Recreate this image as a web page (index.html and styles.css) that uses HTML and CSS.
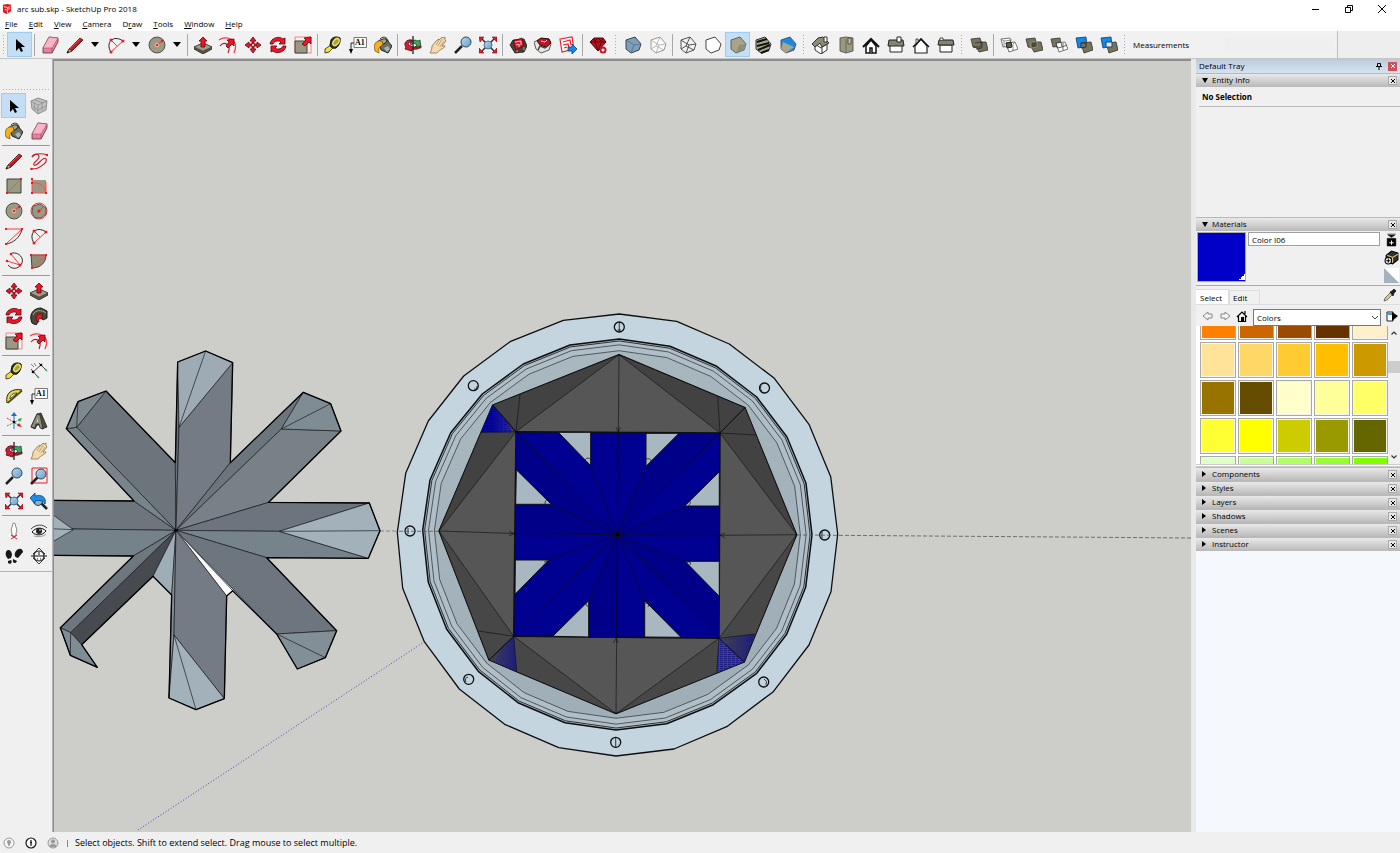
FILE: index.html
```html
<!DOCTYPE html>
<html lang="en">
<head>
<meta charset="utf-8">
<title>arc sub.skp - SketchUp Pro 2018</title>
<link rel="stylesheet" href="styles.css">
</head>
<body>
<svg class="sprite" aria-hidden="true">
<defs>
<g id="cube"><path d="M2 4l9-3 6 7-2 6-8 3-5-4z" stroke-linejoin="round"/></g>
<linearGradient id="lens" x2="1" y2="1"><stop stop-color="#b9d8f0"/><stop offset="1" stop-color="#6b9cc8"/></linearGradient>
</defs>
<symbol id="cursor" viewBox="0 0 18 18"><path d="M5 3v12l3-3 2 4 2-1-2-4h4z" fill="#000"/></symbol>
<symbol id="eraser" viewBox="0 0 18 18"><path d="M8 1l9 1v4l-6 11-9 0v-5z" fill="#e87f9d" stroke="#5d303c" stroke-width=".8"/><path d="M8 1l9 1-6 10-9 0z" fill="#f9b5c8" stroke="#8d4a5c" stroke-width=".5"/><path d="M11 12v5" stroke="#8d4a5c" stroke-width=".7"/></symbol>
<symbol id="pencil" viewBox="0 0 18 18"><path d="M1 17l2-4L14 2l3 2L6 15z" fill="#c81420" stroke="#3b0d0d" stroke-width=".8"/><path d="M1 17l2-4 3 2z" fill="#d9b98b" stroke="#222" stroke-width=".6"/><path d="M4 12.500L14.500 3" stroke="#f46b63" stroke-width=".8"/><path d="M1 17l1-2 1 1z"/></symbol>
<symbol id="arc" viewBox="0 0 18 18"><path d="M4 16C-2 7 6-2 16 5" fill="none" stroke="#222"/><path d="M4 16L16 5M5 5l5 5" stroke="#ff2b36"/><g fill="#f01824"><circle cx="4" cy="16" r="1.500"/><circle cx="16" cy="5" r="1.500"/><circle cx="4" cy="4" r="1.500"/></g></symbol>
<symbol id="circle" viewBox="0 0 18 18"><circle cx="9" cy="9" r="8" fill="#9b9981" stroke="#55544a"/><path d="M9 9l5-4" stroke="#ff2b36"/><circle cx="9" cy="9" r="1.800" fill="#f01824" stroke="#fff" stroke-width=".6"/><circle cx="14" cy="5" r="1.200" fill="#f01824"/></symbol>
<symbol id="push" viewBox="0 0 18 18"><path d="M0 11l9-4 9 4v2l-9 5-9-5z" fill="#56564a" stroke="#26261f" stroke-width=".8"/><path d="M0 11l9-4 9 4-9 4z" fill="#a09e88" stroke="#3c3b30" stroke-width=".6"/><path d="M9 1l4 4h-2v6H7V5H5z" fill="#f21325" stroke="#540710" stroke-width=".8"/></symbol>
<symbol id="offset" viewBox="0 0 18 18"><path d="M0 4C7-1 21 3 15 17" fill="none" stroke="#ff3640" stroke-width="1.200"/><path d="M1 10c4-5 12-2 8 7" fill="none" stroke="#a62024" stroke-width="1.200"/><path d="M7 10l3-4-2-2 7-1v7l-2-2-4 4z" fill="#f21325" stroke="#540710" stroke-width=".8"/></symbol>
<symbol id="move" viewBox="0 0 18 18"><path d="M9 1l3 4h-2v3h3V6l4 3-4 3v-2h-3v3h2l-3 4-3-4h2v-3H5v2L1 9l4-3v2h3V5H6z" fill="#f21325" stroke="#540710" stroke-width=".8"/><circle cx="9" cy="9" r="1" fill="#fff"/></symbol>
<symbol id="rotate" viewBox="0 0 18 18"><g fill="#f21325" stroke="#540710" stroke-width=".8"><path d="M1 8c1-7 10-8 13-5l2-1v6h-6l2-2C10 4 5 5 4 8z"/><path d="M17 10c-1 7-10 8-13 5l-2 1v-6h6l-2 2c2 2 7 1 8-2z"/></g></symbol>
<symbol id="scale" viewBox="0 0 18 18"><path d="M1 1h16v16H1z" fill="none" stroke="#f76a72" stroke-width=".8"/><path d="M1 5h12v12H1z" fill="#9b9981" stroke="#44443a"/><path d="M8 8l4-4-2-2 7-1v7l-2-2-4 4z" fill="#f21325" stroke="#540710" stroke-width=".8"/></symbol>
<symbol id="tape" viewBox="0 0 18 18"><path d="M1 13l6-4 3 2-5 5-4 1z" fill="#f7e332" stroke="#222" stroke-width=".8"/><path d="M7 4c1-3 6-4 9-2 1 3-1 8-4 10-3 1-6-1-6-3z" fill="#30302b" stroke="#111"/><ellipse cx="12" cy="6" rx="4" ry="2.500" fill="#a09b62" stroke="#f0e241" stroke-width="1.500" transform="rotate(-50 12 6)"/></symbol>
<symbol id="labelbox" viewBox="0 0 18 18"><path d="M5 1.500h12.500v10H5z" fill="#fff" stroke="#777"/><path d="M5 7H2v7" fill="none" stroke="#222"/><path d="M0 13h4l-2 5z"/></symbol>
<symbol id="paint" viewBox="0 0 18 18"><path d="M6 3c4-4 9-1 8 4" fill="none" stroke="#333"/><path d="M5 5l7-2 6 7-4 7-7-3z" fill="#6f6e5e" stroke="#24241e"/><ellipse cx="8" cy="6" rx="5" ry="2.500" fill="#a4a28a" stroke="#333" transform="rotate(-22 8 6)"/><path d="M8 5C2 4-1 8 1 15l4 2c-1-5 1-7 4-8z" fill="#f4b222" stroke="#6d4b0a" stroke-width=".7"/><path d="M10 12l4-2 2 3-3 3z" fill="#9db6c4"/></symbol>
<symbol id="orbit" viewBox="0 0 18 18"><path d="M7 9c-2-4 3-6 7-4l2-1 1 8-6-1 2-2c-2-2-4-2-6 0z" fill="#3ba55f" stroke="#1c4228" stroke-width=".8"/><path d="M8 4C2 3-1 8 2 11l-1 2 7 2v-2c5 1 9-1 9-3-4 2-9 1-12-1-2-2 1-3 3-3z" fill="#d71b32" stroke="#4b0911" stroke-width=".8"/><path d="M9 0v18" stroke="#222" stroke-width="1.300"/></symbol>
<symbol id="pan" viewBox="0 0 18 18"><path d="M1 17c1-2 2-4 2-7l4-5 3-2v1l3-3 1 1 2-1v3l1 1-4 5 3 0c0 2-5 3-8 7z" fill="#f3d9ad" stroke="#8a714b" stroke-width=".8"/><path d="M7 9l3-5M9 10l4-7M11 11l4-6" stroke="#9d8256" stroke-width=".6"/></symbol>
<symbol id="zoom" viewBox="0 0 18 18"><path d="M1 17l7-7" stroke="#222" stroke-width="2.500"/><circle cx="12" cy="6" r="5" fill="url(#lens)" stroke="#34485a"/></symbol>
<symbol id="extents" viewBox="0 0 18 18"><path d="M3 3l12 12M15 3L3 15" stroke="#333" stroke-width="1.500"/><circle cx="9" cy="9" r="4" fill="url(#lens)" stroke="#52708a"/><g fill="#f21325" stroke="#540710" stroke-width=".5"><path d="M0 1h5L1 6zM18 1v5l-5-5zM0 17v-5l5 5zM18 17h-5l5-5z"/></g></symbol>
<symbol id="warehouse" viewBox="0 0 18 18"><path d="M1 9l3-5 11-1 3 7-3 6-9 1z" fill="#484137" stroke="#191712" stroke-width=".8"/><path d="M4 5l9-3 2 8-8 4z" fill="#d51426" stroke="#5a0911" stroke-width=".8"/><path d="M6 6l6-1v4M7 9l3-1v3" fill="none" stroke="#fff" stroke-width=".8"/><path d="M8 14v2M15 11v3" stroke="#b6ad95"/></symbol>
<symbol id="share" viewBox="0 0 18 18"><path d="M0 6l6-3h9l2 5-2 6-8 3-5-4z" fill="#e8e6df" stroke="#333" stroke-width=".8"/><path d="M3 5l4-3 8 1 2 4-5 4-6-2z" fill="#c61324" stroke="#30080c"/><path d="M7 5l4 1 2-2" fill="none" stroke="#fff" stroke-width=".8"/><path d="M4 14l2-4 5 2 4-3" fill="none" stroke="#444" stroke-width="1.500"/></symbol>
<symbol id="layout" viewBox="0 0 18 18"><path d="M1 3l12-2 2 12-12 3z" fill="#fff" stroke="#ee1d2d" stroke-width="1.200"/><path d="M4 6l7-2 1 5M4 9l5-1 1 4M5 12l3-1" fill="none" stroke="#ee1d2d" stroke-width="1.200"/><path d="M9 11h4V8l5 5-5 5v-3H9z" fill="#1688ed" stroke="#074177" stroke-width=".8"/></symbol>
<symbol id="extension" viewBox="0 0 18 18"><path d="M1 6l4-4h9l3 4-8 9z" fill="#bd1022" stroke="#3f0810"/><path d="M1 6h15M5 2l4 13 5-13M5 6l4-4 4 4" fill="none" stroke="#650811"/><circle cx="14" cy="14" r="2.500" fill="#fff" stroke="#c41425" stroke-width="2"/></symbol>
<symbol id="xray" viewBox="0 0 18 18"><g fill="#7e9fb8" stroke="#36444f"><use href="#cube"/></g><path d="M2 4l8 5 7-1M10 9l-3 8" stroke="#4f697c" fill="none" stroke-width=".7"/></symbol>
<symbol id="backedges" viewBox="0 0 18 18"><g fill="#fafafa" stroke="#999"><use href="#cube"/></g><path d="M2 4l8 5 7-1M10 9l-3 8M7 10l4-9M7 10l8 4M7 10l-5 3" stroke="#aaa" fill="none" stroke-width=".8"/></symbol>
<symbol id="wire" viewBox="0 0 18 18"><g fill="none" stroke="#444" stroke-width=".9"><use href="#cube"/><path d="M2 4l8 5 7-1M10 9l-3 8M11 1L7 10l8 4M7 10l-5 3"/></g></symbol>
<symbol id="hidden" viewBox="0 0 18 18"><g fill="#fff" stroke="#444"><use href="#cube"/></g></symbol>
<symbol id="shaded" viewBox="0 0 18 18"><g fill="#a8a48b" stroke="#666452"><use href="#cube"/></g><path d="M10 9l7-1-2 6-8 3z" fill="#918e77"/></symbol>
<symbol id="texture" viewBox="0 0 18 18"><g fill="#aaa68d" stroke="#333"><use href="#cube"/></g><path d="M3 6l10-3M3 10l12-3M4 14l12-5M7 17l8-3" stroke="#111" stroke-width="2"/></symbol>
<symbol id="mono" viewBox="0 0 18 18"><g fill="#1688e6" stroke="#525a60"><use href="#cube"/></g><path d="M2 13l2-7 11 5-8 6z" fill="#aaa58c"/></symbol>
<symbol id="iso" viewBox="0 0 18 18"><path d="M3 8v6l6 4 6-4V8L9 12z" fill="#fff" stroke="#333"/><path d="M0 8l6-6 5-1 6 6-7 4-2-4-5 4z" fill="#8e8b76" stroke="#333"/><path d="M12 1h3v5h-3z" fill="#fff" stroke="#333"/><path d="M10 12v6" stroke="#333"/></symbol>
<symbol id="top" viewBox="0 0 18 18"><path d="M3 2l6-1 7 1v13l-7 2-6-2z" fill="#9b9880" stroke="#45453a" stroke-width=".8"/><path d="M9 3v14" stroke="#6d6b5a"/><path d="M11 2h3v6h-3z" fill="#c2bea3" stroke="#45453a" stroke-width=".8"/></symbol>
<symbol id="front" viewBox="0 0 18 18"><path d="M4 10v7h10v-7L9 4z" fill="#fff" stroke="#111" stroke-width="1.500"/><path d="M1 11l8-8 8 8" fill="none" stroke="#111" stroke-width="2"/><path d="M8 17v-5h2v5" fill="#fff" stroke="#111" stroke-width="1.500"/></symbol>
<symbol id="right" viewBox="0 0 18 18"><path d="M3 9h12v7H3z" fill="#fff" stroke="#222"/><path d="M2 4h14l1 6H1z" fill="#858371" stroke="#222"/><path d="M10 1h4v5h-4z" fill="#fff" stroke="#222"/></symbol>
<symbol id="back" viewBox="0 0 18 18"><path d="M3 10v7h12v-7L9 3z" fill="#fff" stroke="#222" stroke-width="1.200"/><path d="M1 11l8-8 8 8" fill="none" stroke="#111" stroke-width="1.500"/><path d="M4 7V3h2v2" fill="#fff" stroke="#222" stroke-width=".8"/></symbol>
<symbol id="left" viewBox="0 0 18 18"><path d="M3 9h12v7H3z" fill="#fff" stroke="#222"/><path d="M2 4h14l1 5H1z" fill="#858371" stroke="#222"/><path d="M3 4V2h3v2" fill="#fff" stroke="#222" stroke-width=".8"/></symbol>
<symbol id="shell" viewBox="0 0 18 18"><path d="M1 3l9-1 1 4 5 0 2 8-9 2-2-4-4-1z" fill="#77735f" stroke="#33312a" stroke-width=".8"/><path d="M5 7l7-1v6l-6 1M11 5v6H3" fill="none" stroke="#33312a" stroke-width=".8"/></symbol>
<symbol id="intersect" viewBox="0 0 18 18"><path d="M1 3l9-1 1 8-8 1zM6 7l9-1 3 7-9 3z" fill="#fff" stroke="#555" stroke-width=".8"/><path d="M6 7l5-1 1 5-5 1z" fill="#65624f" stroke="#222"/><path d="M1 3l3 2 8-1M15 6l-2 2v7M4 5l0 6" fill="none" stroke="#777" stroke-width=".8"/></symbol>
<symbol id="union" viewBox="0 0 18 18"><path d="M1 3l9-1 1 4 5 0 2 8-9 2-2-4-4-1z" fill="#77735f" stroke="#33312a" stroke-width=".8"/><path d="M6 6l6 0v5l-6 1z" fill="#4a4639" stroke="#9f998a" stroke-width=".8"/></symbol>
<symbol id="subtract" viewBox="0 0 18 18"><path d="M1 3l9-1 1 8-8 1z" fill="#77735f" stroke="#33312a" stroke-width=".8"/><path d="M6 7l9-1 3 7-9 3z" fill="#fff" stroke="#555" stroke-width=".8"/><path d="M6 7l5-1 1 5-5 1zM12 11l5-2M13 7v7" fill="none" stroke="#444" stroke-width=".8"/></symbol>
<symbol id="trim" viewBox="0 0 18 18"><path d="M1 2l10-1 1 9-9 2z" fill="#1688e6" stroke="#063b68" stroke-width=".8"/><path d="M6 7l10-1 2 8-9 3z" fill="#77735f" stroke="#33312a" stroke-width=".8"/><path d="M6 7l5 0v4l-5 1z" fill="#77735f" stroke="#222" stroke-width=".8"/></symbol>
<symbol id="split" viewBox="0 0 18 18"><path d="M1 2l10-1 1 9-9 2z" fill="#1688e6" stroke="#063b68" stroke-width=".8"/><path d="M6 7l10-1 2 8-9 3z" fill="#77735f" stroke="#33312a" stroke-width=".8"/><path d="M6 6l6 0v5l-6 0z" fill="#e9e8e4" stroke="#0b4c83"/></symbol>
<symbol id="component" viewBox="0 0 18 18"><path d="M1 4l7-3 9 3-1 9-8 4-6-5z" fill="#c0c0c0" stroke="#909090"/><path d="M1 4l7 4 9-4M8 8v9M4 6l1 8M12 6v8M3 10l5 3 8-4M5 3l8 3" fill="none" stroke="#909090" stroke-width=".8"/></symbol>
<symbol id="freehand" viewBox="0 0 18 18"><path d="M2 5c2-4 7-4 7 0S2 10 4 13s10-10 12-6-6 8-8 9-6 1-7 1" fill="none" stroke="#c2222c" stroke-width="1.200"/><path d="M2 5c4-4 9-4 15-2" fill="none" stroke="#c2222c" stroke-width="1.200"/><circle cx="1.500" cy="17" r="1.300" fill="#f01824"/><circle cx="17" cy="3" r="1.300" fill="#f01824"/></symbol>
<symbol id="rect" viewBox="0 0 18 18"><path d="M2 2h14v14H2z" fill="#9b9981" stroke="#44443a"/><path d="M2 16L16 2" stroke="#ff4a50"/><path d="M1 15h2v2H1zM15 1h2v2h-2z" fill="#f01824"/></symbol>
<symbol id="rotrect" viewBox="0 0 18 18"><path d="M2 3h14v13H2z" fill="#9b9981"/><path d="M2 17V2M2 6c9-1 13 4 14 10v1M2 16h14V5" fill="none" stroke="#ff4a50"/><path d="M1 1h2v2H1zM1 5h2v2H1zM1 15h2v2H1zM15 15h2v2h-2z" fill="#f01824"/></symbol>
<symbol id="polygon" viewBox="0 0 18 18"><circle cx="9" cy="9" r="8" fill="none" stroke="#ff3640"/><path d="M3 4l7-2 6 4 0 6-5 4H5l-3-6z" fill="#9b9981" stroke="#55544a"/><path d="M9 9l4-4" stroke="#ff2b36"/><circle cx="9" cy="9" r="1.600" fill="#f01824"/></symbol>
<symbol id="arc2" viewBox="0 0 18 18"><path d="M1 17C8 16 15 11 17 2" fill="none" stroke="#333"/><path d="M1 2h16L1 17" fill="none" stroke="#ff3640"/><path d="M0 1h2v2H0zM16 1h2v2h-2zM0 16h2v2H0z" fill="#f01824"/></symbol>
<symbol id="arc3" viewBox="0 0 18 18"><path d="M7 1c7-1 12 5 10 10S8 19 3 13" fill="none" stroke="#333"/><path d="M6 2l9 11L2 9" fill="none" stroke="#ff3640"/><g fill="#f01824"><circle cx="6" cy="2" r="1.300"/><circle cx="15" cy="13" r="1.500"/><circle cx="2" cy="9" r="1.300"/></g></symbol>
<symbol id="pie" viewBox="0 0 18 18"><path d="M1 3h15C16 10 11 16 2 16z" fill="#8f8d77" stroke="#44443a"/><path d="M1 3h15L2 16" fill="none" stroke="#ff4a50"/><path d="M0 2h2v2H0zM15 2h2v2h-2zM1 15h2v2H1z" fill="#f01824"/></symbol>
<symbol id="follow" viewBox="0 0 18 18"><path d="M2 16C-2 7 4 1 11 1l6 3v7l-4 2-2-4c-3 0-4 2-3 6l-2 3z" fill="#4a483d" stroke="#1a1914"/><path d="M3 8c2-6 9-5 13-2" fill="none" stroke="#aaa58c"/><path d="M7 14C4 9 9 6 12 7l0 5c-3-1-4 0-3 3z" fill="#f21325" stroke="#540710" stroke-width=".7"/></symbol>
<symbol id="dimension" viewBox="0 0 18 18"><path d="M3 10l8-7M1 7l6 7M9 1l6 6" stroke="#333" stroke-width=".9"/><path d="M1 2l3 3M4 1l2 3" stroke="#777" stroke-width=".9"/><path d="M7 14l2 2M15 7l2 2" stroke="#22a344" stroke-width="1.500"/><circle cx="3" cy="10" r="1.300"/><circle cx="11" cy="3" r="1.300"/></symbol>
<symbol id="protractor" viewBox="0 0 18 18"><path d="M2 16C0 6 7 1 17 3z" fill="#eadb35" stroke="#222"/><path d="M5 12c0-4 3-6 7-6z" fill="#f0f0f0" stroke="#222" stroke-width=".8"/><path d="M3 16L17 4" stroke="#54500f" stroke-width="1.500"/></symbol>
<symbol id="axes" viewBox="0 0 18 18"><path d="M9 17V2" stroke="#1a6fc4"/><path d="M9 0l3 4H6z" fill="#1a6fc4"/><path d="M2 6l13 8" stroke="#d2232e" stroke-dasharray="2 1"/><path d="M17 15l-5-1 2-3z" fill="#e01824"/><path d="M2 14l12-6" stroke="#29ab4a" stroke-dasharray="2 1"/><path d="M17 6l-4 1 2 3z" fill="#29ab4a"/><circle cx="9" cy="10" r="1.200"/></symbol>
<symbol id="text3d" viewBox="0 0 18 18"><path d="M1 15L7 2l4-1 6 14-5 2-2-4H7l-2 4z" fill="#4f4d42" stroke="#222" stroke-width=".8"/><path d="M1 15L7 2l3 1 3 14-3-1-1-4H6l-1 4z" fill="#8f8d79" stroke="#222" stroke-width=".7"/><path d="M7 10h1V6z" fill="#f0f0f0"/></symbol>
<symbol id="zoomwin" viewBox="0 0 18 18"><path d="M2 1h15v15H2z" fill="none" stroke="#f01824"/><path d="M1 17l7-7" stroke="#222" stroke-width="2.500"/><circle cx="11" cy="7" r="5" fill="url(#lens)" stroke="#34485a"/></symbol>
<symbol id="previous" viewBox="0 0 18 18"><path d="M10 10l7 7" stroke="#222" stroke-width="2.500"/><circle cx="8" cy="9" r="4.500" fill="url(#lens)" stroke="#34485a"/><path d="M0 6l5-5v3c6-2 12 1 10 8-2-4-5-4-10-3v3z" fill="#228be6" stroke="#0c3d6c" stroke-width=".8"/></symbol>
<symbol id="camera" viewBox="0 0 18 18"><path d="M9 1c-2 0-1 3-2 4-1 2-1 5 0 6v3h4v-3c1-1 1-4 0-6-1-1 0-4-2-4z" fill="#fff" stroke="#666" stroke-width=".8"/><path d="M6 17l6-4M12 17l-6-4" stroke="#f01824"/></symbol>
<symbol id="look" viewBox="0 0 18 18"><path d="M1 7c5-5 12-5 16-1" fill="none" stroke="#444"/><path d="M2 10c4-5 10-5 14-1-4 5-10 5-14 1z" fill="#eee" stroke="#111"/><circle cx="9" cy="9" r="3" fill="#222"/><circle cx="10" cy="8" r=".8" fill="#fff"/><path d="M4 14c4 1 9 1 12-2" fill="none" stroke="#999"/></symbol>
<symbol id="walk" viewBox="0 0 18 18"><path d="M1 5c2-4 6-1 6 3l-1 3-3 1C1 10 0 7 1 5zM3 14l3-1c2 3-1 5-3 3zM11 4c3-4 7-2 7 1l-5 6c-4-1-4-4-2-7zM8 12l4 2c-1 3-5 3-4-2z" fill="#161616"/></symbol>
<symbol id="section" viewBox="0 0 18 18"><path d="M9 1l6 6H3zM9 17l6-6H3z" fill="#f8f8f8" stroke="#111" stroke-width=".8"/><circle cx="9" cy="9" r="5" fill="#f8f8f8" stroke="#111"/><path d="M1 9h16M9 5v3M7 12h1M10 12h1" stroke="#111"/></symbol>
<symbol id="x" viewBox="0 0 8 8"><path d="M2 2l4 4M6 2L2 6" stroke="currentColor"/></symbol>
<symbol id="logo" viewBox="0 0 12 12"><path d="M1 2l5-1 4 1v7l-5 3-4-2z" fill="#e41724"/><path d="M2 4l4 1 3-1M3 7l3 1V11M6 5v2l3-1" fill="none" stroke="#fff" stroke-width=".9"/></symbol>
</svg>

<header class="titlebar">
  <svg class="logo"><use href="#logo"/></svg>
  <h1>arc sub.skp - SketchUp Pro 2018</h1>
  <div class="winbtns">
    <button aria-label="Minimize"><svg viewBox="0 0 10 10"><path d="M1 5.500h7" stroke="#000"/></svg></button>
    <button aria-label="Restore"><svg viewBox="0 0 10 10"><path d="M1.500 3.500h5v5h-5zM3.500 3V1.500h5v5H7" fill="none" stroke="#000"/></svg></button>
    <button aria-label="Close"><svg viewBox="0 0 10 10"><path d="M1 1l8 8M9 1L1 9" stroke="#000"/></svg></button>
  </div>
</header>
<nav class="menu" aria-label="Menu">
  <button><u>F</u>ile</button><button><u>E</u>dit</button><button><u>V</u>iew</button><button><u>C</u>amera</button><button>D<u>r</u>aw</button><button><u>T</u>ools</button><button><u>W</u>indow</button><button><u>H</u>elp</button>
</nav>

<div class="toolbar" role="toolbar" aria-label="Tools">
  <div class="group first">
    <i class="grip"></i>
    <button class="tool on" aria-label="Select"><svg><use href="#cursor"/></svg></button><i class="sep"></i>
    <button class="tool" aria-label="Eraser"><svg><use href="#eraser"/></svg></button>
    <button class="tool" aria-label="Line"><svg><use href="#pencil"/></svg></button><button class="drop" aria-label="Line tools"></button>
    <button class="tool" aria-label="Arc"><svg><use href="#arc"/></svg></button><button class="drop" aria-label="Arc tools"></button>
    <button class="tool" aria-label="Circle"><svg><use href="#circle"/></svg></button><button class="drop" aria-label="Shape tools"></button><i class="sep"></i>
    <button class="tool" aria-label="Push/Pull"><svg><use href="#push"/></svg></button>
    <button class="tool" aria-label="Offset"><svg><use href="#offset"/></svg></button>
    <button class="tool" aria-label="Move"><svg><use href="#move"/></svg></button>
    <button class="tool" aria-label="Rotate"><svg><use href="#rotate"/></svg></button>
    <button class="tool" aria-label="Scale"><svg><use href="#scale"/></svg></button><i class="sep"></i>
    <button class="tool" aria-label="Tape Measure"><svg><use href="#tape"/></svg></button>
    <button class="tool" aria-label="Text"><svg viewBox="0 0 18 18"><use href="#labelbox"/><text class="glyph" x="6" y="9">A1</text></svg></button>
    <button class="tool" aria-label="Paint Bucket"><svg><use href="#paint"/></svg></button><i class="sep"></i>
    <button class="tool" aria-label="Orbit"><svg><use href="#orbit"/></svg></button>
    <button class="tool" aria-label="Pan"><svg><use href="#pan"/></svg></button>
    <button class="tool" aria-label="Zoom"><svg><use href="#zoom"/></svg></button>
    <button class="tool" aria-label="Zoom Extents"><svg><use href="#extents"/></svg></button><i class="sep"></i>
    <button class="tool" aria-label="3D Warehouse"><svg><use href="#warehouse"/></svg></button>
    <button class="tool" aria-label="Share Model"><svg><use href="#share"/></svg></button>
    <button class="tool" aria-label="Send to LayOut"><svg><use href="#layout"/></svg></button><i class="sep"></i>
    <button class="tool" aria-label="Extension Warehouse"><svg><use href="#extension"/></svg></button>
  </div>
  <div class="group">
    <i class="grip"></i>
    <button class="tool" aria-label="X-Ray"><svg><use href="#xray"/></svg></button>
    <button class="tool" aria-label="Back Edges"><svg><use href="#backedges"/></svg></button><i class="sep"></i>
    <button class="tool" aria-label="Wireframe"><svg><use href="#wire"/></svg></button>
    <button class="tool" aria-label="Hidden Line"><svg><use href="#hidden"/></svg></button>
    <button class="tool on" aria-label="Shaded"><svg><use href="#shaded"/></svg></button>
    <button class="tool" aria-label="Shaded With Textures"><svg><use href="#texture"/></svg></button>
    <button class="tool" aria-label="Monochrome"><svg><use href="#mono"/></svg></button>
  </div>
  <div class="group">
    <i class="grip"></i>
    <button class="tool" aria-label="Iso"><svg><use href="#iso"/></svg></button>
    <button class="tool" aria-label="Top"><svg><use href="#top"/></svg></button>
    <button class="tool" aria-label="Front"><svg><use href="#front"/></svg></button>
    <button class="tool" aria-label="Right"><svg><use href="#right"/></svg></button>
    <button class="tool" aria-label="Back"><svg><use href="#back"/></svg></button>
    <button class="tool" aria-label="Left"><svg><use href="#left"/></svg></button>
  </div>
  <div class="group">
    <i class="grip"></i>
    <button class="tool" aria-label="Outer Shell"><svg><use href="#shell"/></svg></button><i class="sep"></i>
    <button class="tool" aria-label="Intersect"><svg><use href="#intersect"/></svg></button>
    <button class="tool" aria-label="Union"><svg><use href="#union"/></svg></button>
    <button class="tool" aria-label="Subtract"><svg><use href="#subtract"/></svg></button>
    <button class="tool" aria-label="Trim"><svg><use href="#trim"/></svg></button>
    <button class="tool" aria-label="Split"><svg><use href="#split"/></svg></button>
  </div>
  <div class="group measure">
    <i class="grip"></i>
    <label for="measurements">Measurements</label><input id="measurements" type="text" readonly>
  </div>
</div>

<main class="work">
  <aside class="palette" aria-label="Large tool set">
    <div class="palette-tools">
      <i class="hgrip"></i>
      <button class="tool on" aria-label="Select"><svg><use href="#cursor"/></svg></button>
      <button class="tool" aria-label="Make Component"><svg><use href="#component"/></svg></button>
      <button class="tool" aria-label="Paint Bucket"><svg><use href="#paint"/></svg></button>
      <button class="tool" aria-label="Eraser"><svg><use href="#eraser"/></svg></button>
      <i class="hsep"></i>
      <button class="tool" aria-label="Line"><svg><use href="#pencil"/></svg></button>
      <button class="tool" aria-label="Freehand"><svg><use href="#freehand"/></svg></button>
      <button class="tool" aria-label="Rectangle"><svg><use href="#rect"/></svg></button>
      <button class="tool" aria-label="Rotated Rectangle"><svg><use href="#rotrect"/></svg></button>
      <button class="tool" aria-label="Circle"><svg><use href="#circle"/></svg></button>
      <button class="tool" aria-label="Polygon"><svg><use href="#polygon"/></svg></button>
      <button class="tool" aria-label="Arc"><svg><use href="#arc2"/></svg></button>
      <button class="tool" aria-label="2 Point Arc"><svg><use href="#arc"/></svg></button>
      <button class="tool" aria-label="3 Point Arc"><svg><use href="#arc3"/></svg></button>
      <button class="tool" aria-label="Pie"><svg><use href="#pie"/></svg></button>
      <i class="hsep"></i>
      <button class="tool" aria-label="Move"><svg><use href="#move"/></svg></button>
      <button class="tool" aria-label="Push/Pull"><svg><use href="#push"/></svg></button>
      <button class="tool" aria-label="Rotate"><svg><use href="#rotate"/></svg></button>
      <button class="tool" aria-label="Follow Me"><svg><use href="#follow"/></svg></button>
      <button class="tool" aria-label="Scale"><svg><use href="#scale"/></svg></button>
      <button class="tool" aria-label="Offset"><svg><use href="#offset"/></svg></button>
      <i class="hsep"></i>
      <button class="tool" aria-label="Tape Measure"><svg><use href="#tape"/></svg></button>
      <button class="tool" aria-label="Dimension"><svg><use href="#dimension"/></svg></button>
      <button class="tool" aria-label="Protractor"><svg><use href="#protractor"/></svg></button>
      <button class="tool" aria-label="Text"><svg viewBox="0 0 18 18"><use href="#labelbox"/><text class="glyph" x="6" y="9">A1</text></svg></button>
      <button class="tool" aria-label="Axes"><svg><use href="#axes"/></svg></button>
      <button class="tool" aria-label="3D Text"><svg><use href="#text3d"/></svg></button>
      <i class="hsep"></i>
      <button class="tool" aria-label="Orbit"><svg><use href="#orbit"/></svg></button>
      <button class="tool" aria-label="Pan"><svg><use href="#pan"/></svg></button>
      <button class="tool" aria-label="Zoom"><svg><use href="#zoom"/></svg></button>
      <button class="tool" aria-label="Zoom Window"><svg><use href="#zoomwin"/></svg></button>
      <button class="tool" aria-label="Zoom Extents"><svg><use href="#extents"/></svg></button>
      <button class="tool" aria-label="Previous"><svg><use href="#previous"/></svg></button>
      <i class="hsep"></i>
      <button class="tool" aria-label="Position Camera"><svg><use href="#camera"/></svg></button>
      <button class="tool" aria-label="Look Around"><svg><use href="#look"/></svg></button>
      <button class="tool" aria-label="Walk"><svg><use href="#walk"/></svg></button>
      <button class="tool" aria-label="Section Plane"><svg><use href="#section"/></svg></button>
    </div>
  </aside>

  <section class="viewport" aria-label="Model view">
    <svg viewBox="54 61 1137 771" preserveAspectRatio="xMinYMin slice" role="img" aria-label="3D model">
      <defs>
        <pattern id="weaveA" width="4" height="2" patternUnits="userSpaceOnUse"><path d="M0 .5h3" stroke="#0a0a9c"/></pattern>
        <pattern id="weaveB" width="3" height="3" patternUnits="userSpaceOnUse" patternTransform="rotate(-25)"><path d="M.5 0v3" stroke="#1c1c9c" stroke-width="1"/></pattern>
        <linearGradient id="well" x2=".3" y2="1"><stop stop-color="#aab8c0"/><stop offset="1" stop-color="#a0aeb7"/></linearGradient>
        <linearGradient id="fade" x2="1"><stop offset=".3" stop-color="#000099"/><stop offset="1" stop-color="#000099" stop-opacity="0"/></linearGradient>
        <linearGradient id="fadeUp" x2="1" y2="0"><stop stop-color="#000099" stop-opacity="0"/><stop offset="1" stop-color="#000099" stop-opacity=".6"/></linearGradient>
        <polygon id="rim" points="619.3,339 570,345 523.3,364 482.3,394 450.7,432.7 430,480 422.7,530 428.3,582.3 446.7,629.3 478.3,671.3 518,702.7 565,722.7 616,730 666.7,723.7 713.3,704.7 756.7,673.3 786.7,634.3 805.7,587.3 812,534.7 806,483.3 787,437 756.7,397 716.7,366.3 670,346.3"/>
      </defs>
      <path d="M138 830L424 642" stroke="#4646b4" stroke-dasharray="1 2"/>
      <path d="M380 531h20" stroke="#888" stroke-dasharray="4 2"/>

      <g transform="translate(50 340) scale(.33333)" stroke="#15181b" stroke-width="2" stroke-linejoin="round">
        <path d="M0 481L252 483 378 571 0 566z" fill="#6d757d"/>
        <path d="M0 566L378 571 250 648 0 646z" fill="#76828a"/>
        <path d="M0 518L70 569 0 610z" fill="#a2b0ba"/><path d="M0 566l70 3"/>
        <path d="M168 153L376 368 378 571 80 262z" fill="#6c747c"/>
        <path d="M80 262L378 571 252 483 49 266z" fill="#79848a"/>
        <path d="M49 266L84 185 168 153 80 262zM84 185L80 262" fill="#7d898f"/>
        <path d="M378 571L250 648 31 863 62 878z" fill="#6e767e"/>
        <path d="M378 571L62 878 95 914 309 709z" fill="#474b4f"/>
        <path d="M31 863L62 878 95 914 142 982 61 946zM62 878L61 946" fill="#7f8c93"/>
        <path d="M378 571L309 709 365 765z" fill="#9fadb6"/>
        <path d="M378 571L548 752 530 768z" fill="#fbfbfb"/>
        <path d="M383 66L376 368 378 571 387 262z" fill="#69717a"/>
        <path d="M548 68L541 368 378 571 387 262z" fill="#747b84"/>
        <path d="M383 66L467 33 548 68 387 262zM467 33L387 262" fill="#9eabb5"/>
        <path d="M541 368L760 157 694 267 378 571z" fill="#6c747c"/>
        <path d="M694 267L873 273 656 487 378 571z" fill="#788188"/>
        <path d="M760 157L842 191 873 273 694 267zM842 191L694 267" fill="#808c93"/>
        <path d="M378 571L656 487 958 489 688 574z" fill="#6d747d"/>
        <path d="M378 571L650 653 955 655 688 574z" fill="#76838a"/>
        <path d="M958 489L990 572 955 655 688 574zM688 574L990 572" fill="#a3b1bb"/>
        <path d="M378 571L650 653 860 872 680 882z" fill="#6d757e"/>
        <path d="M860 872L826 953 742 987 680 882zM826 953L680 882" fill="#828f97"/>
        <path d="M357 1074L365 765 378 571 372 885z" fill="#808c94"/>
        <path d="M378 571L530 768 523 1076 372 885z" fill="#747b84"/>
        <path d="M372 885L523 1076 438 1109 357 1074zM438 1109L372 885" fill="#a3b1bb"/>
        <path d="M376 368L383 66 467 33 548 68 541 368 760 157 842 191 873 273 656 487 958 489 990 572 955 655 650 653 860 872 826 953 742 987 680 882 548 752 530 768 523 1076 438 1109 357 1074 365 765 309 709 95 914 142 982 61 946 31 863 250 648 0 646M0 481L252 483 49 266 84 185 168 153 376 368" fill="none" stroke="#000" stroke-width="4"/>
        <circle cx="378" cy="571" r="5" stroke="none"/>
      </g>

      <g stroke="#0c0e10" stroke-linejoin="round">
        <polygon points="619.3,314 563.3,320.3 510.7,341.3 463.7,376 428.3,421 405.7,473.3 397.3,532.3 402.7,588.3 424.3,641.7 459.3,689 504.7,724.3 558.7,747.7 616,756 674,749 726.7,726.7 773.3,691.7 809,645 831,591.7 837.7,534 830.7,476.7 809,424.3 774.3,378.3 729.3,344 676.7,321.3" fill="#c5d5df" stroke-width="1.300"/>
        <use href="#rim" fill="#a9b8c1" stroke-width="1.500"/>
        <use href="#rim" transform="translate(617.500 534.500) scale(.99) translate(-617.500 -534.500)" fill="#afbec7" stroke-width=".8"/>
        <use href="#rim" transform="translate(617.500 534.500) scale(.97) translate(-617.500 -534.500)" fill="#afbec7" stroke-width=".6"/>
        <use href="#rim" transform="translate(617.500 534.500) scale(.94) translate(-617.500 -534.500)" fill="url(#well)" stroke-width=".6"/>
        <path d="M619 354.700L492.700 405 439 531 489 660 616 713.700 744.300 662 796.700 534.700 745 407.700z" fill="#565656" stroke-width="1.300"/>
        <g fill="#424242" stroke-width=".6">
          <path d="M619 354.700L492.700 405 516 431.700zM439 531L492.700 405 516 431.700zM619 354.700L745 407.700 720 433zM796.700 534.700L745 407.700 720 433z"/>
          <path d="M439 531L489 660 513.700 636.300zM616 713.700L489 660 513.700 636.300zM616 713.700L744.300 662 719 638.300zM796.700 534.700L744.300 662 719 638.300z" fill="#474747"/>
        </g>
        <g stroke="none">
          <path d="M492.700 405L481 432.300H516z" fill="url(#fade)"/>
          <path d="M492.700 405L481 432.300H512l-6-13z" fill="url(#weaveA)" opacity=".8"/>
          <path d="M513.700 636.300L516.700 671.300 489 660z" fill="url(#fadeUp)"/>
          <path d="M513.700 640L516.700 671.300 492 661z" fill="url(#weaveB)" opacity=".6"/>
          <path d="M719 638.300L744.300 662 716.700 672.700z" fill="url(#weaveA)" opacity=".7"/>
          <path d="M719 638.300L755 634 744.300 662z" fill="url(#fadeUp)"/>
          <path d="M719 638.300L755 634 744.300 662z" fill="url(#weaveB)" opacity=".4"/>
        </g>
        <path d="M516 431.700L720 433 719 638.300 513.700 636.300z" fill="#000091" stroke-width="1.500"/>
        <g fill="#000089" stroke="none">
          <path d="M617.300 534.700L516 431.700V470L551 504.300zM617.300 534.700L720 433H679L646 466.300zM515.700 504.300H551.300L617.300 534.700 515 534zM617.300 534.700L719 638.300V596.300L685 561.300zM617.300 534.700L685 506h34.500v28.700zM617.300 534.700V638H588.700V600.700z"/>
        </g>
        <g fill="#a8b7c0" stroke-width="1">
          <path d="M558.300 432.300H590.700V465.700zM516.300 469.700L515.700 504.300H551.300zM646 433.300H679L646 466.300zM719.300 471.700V506H684.700zM515.300 560H548.700L515 594.300zM588.700 600.700V637L552.700 636.300zM644.700 600.700V637L681 637.300zM685 561.300H719.300V596.300z"/>
          <path d="M585 460q3-4 6 0M545 504q0-5 4-5M646 459q5-1 5 2M688 506q4-3 1-6M544 562q5-3 4 3M586 603q0 4 3 3M645 603q5 0 3 4M686 563q6-3 4 2" fill="none" stroke-width=".7"/>
        </g>
        <path d="M617.300 534.700L590.700 465.700M617.300 534.700L551.300 504.300M617.300 534.700L646 466.300M617.300 534.700L684.700 506M617.300 534.700L548.700 560M617.300 534.700L588.700 600.700M617.300 534.700L644.700 600.700M617.300 534.700L685 561.300M516 431.700L719 638.300M720 433L513.700 636.300M619 354.700L616 713.700M439 531L515 533.500 617.300 534.700 720 535.300 796.700 534.700M516 431.700L492.700 405M516 431.700L520 394.300M516 431.700L481 432.300M720 433L717.700 396.700M720 433L745 407.700M720 433L756 435M513.700 636.300L478.300 631M513.700 636.300L489 660M513.700 636.300L516.700 671.300M719 638.300L755 634M719 638.300L744.300 662M719 638.300L716.700 672.700" fill="none" stroke-width=".6"/>
        <path d="M617.300 534.700V638" fill="none"/>
        <path d="M616 427l2.300 5 2-5M509 531l5 2.500-5 2.500M725 533l-5 2.300 5 2.500M613.500 643l2.500-5 2 5" fill="none" stroke-width=".6"/>
        <circle cx="617.300" cy="534.700" r="2"/>
        <g fill="#c5d5df" stroke-width="1.300">
          <circle cx="619.300" cy="327" r="5"/><circle cx="473.300" cy="385.700" r="5"/><circle cx="410" cy="531" r="5"/><circle cx="468.700" cy="679.300" r="5"/><circle cx="615.700" cy="742.300" r="5"/><circle cx="763.700" cy="682" r="5"/><circle cx="824.700" cy="535" r="5"/><circle cx="764.500" cy="388" r="5"/>
        </g>
        <path d="M619.300 322v10M617.500 330h3.500M615.700 737v10M474 389q3 1 3-3M408 528v6M466 682q-2-4 2-5M766 685q2-4-2-6M822 531v7M762 391q-3-2-1-5" fill="none" stroke-width=".8"/>
      </g>
      <path d="M399 531.300h40M797 535L1191 538" stroke="#555" stroke-width=".8" stroke-dasharray="4 2"/>
    </svg>
  </section>

  <aside class="tray">
    <div class="tray-title"><h2>Default Tray</h2>
      <button aria-label="Pin"><svg viewBox="0 0 8 8"><path d="M2.500 1.500h3v3h-3zM1 4.500h6M4 5v3" fill="none" stroke="#000"/></svg></button>
      <button class="close-red" aria-label="Close tray"><svg><use href="#x"/></svg></button></div>
    <div class="head"><button class="toggle open">Entity Info</button><button class="close" aria-label="Close Entity Info"><svg><use href="#x"/></svg></button></div>
    <div class="entity"><p>No Selection</p></div>
    <div class="head"><button class="toggle open">Materials</button><button class="close" aria-label="Close Materials"><svg><use href="#x"/></svg></button></div>
    <div class="material">
      <div class="preview"></div>
      <input type="text" value="Color I06" aria-label="Material name">
      <div class="side">
        <button aria-label="Secondary pane"><svg viewBox="0 0 14 14"><path d="M3 2h8M7 5L4 3h6zM3 6h8v7H3z" stroke="#000" stroke-width=".6"/><path d="M7 8v4M5 10h4" stroke="#fff"/></svg></button>
        <button aria-label="Create material"><svg viewBox="0 0 14 14"><path d="M2 5l5-4 6 2v6l-5 4-6-2z" fill="#33312a" stroke="#000"/><path d="M3 5l5 2 5-3M8 7v5" fill="none" stroke="#d7c48e"/><circle cx="4" cy="10" r="3" fill="#fff" stroke="#000"/><path d="M4 8v4M2 10h4" stroke="#000"/></svg></button>
        <button aria-label="Default material"><svg viewBox="0 0 16 16"><path d="M0 0h16v16z" fill="#fff"/><path d="M0 0v16h16z" fill="#a3b2bc"/></svg></button>
      </div>
    </div>
    <div class="tabs" role="tablist">
      <button role="tab" class="active">Select</button><button role="tab">Edit</button>
      <button class="dropper" aria-label="Sample paint"><svg viewBox="0 0 14 14"><path d="M1 13l1-3 6-6 2 2-6 6z" fill="#d8c88a" stroke="#444" stroke-width=".7"/><path d="M7 4l2-1 2-2 2 2-2 2-1 3z" fill="#222" stroke="#111" stroke-width=".8"/></svg></button>
    </div>
    <div class="nav">
      <button aria-label="Back"><svg viewBox="0 0 12 12"><path d="M1 6l5-4v2h4v4H6v2z" fill="#f4f4f4" stroke="#888"/></svg></button>
      <button aria-label="Forward"><svg viewBox="0 0 12 12"><path d="M11 6L6 2v2H2v4h4v2z" fill="#f4f4f4" stroke="#888"/></svg></button>
      <button aria-label="In Model"><svg viewBox="0 0 12 12"><path d="M1 7l5-5 5 5M2.500 6v5.500h7V6M9 4V1" fill="none" stroke="#000" stroke-width="1.200"/><path d="M5 7h3v5H5z"/></svg></button>
      <span class="combo"><select aria-label="Collection"><option>Colors</option></select><svg viewBox="0 0 8 8"><path d="M1 2l3 3 3-3" fill="none" stroke="#444"/></svg></span>
      <button aria-label="Details"><svg viewBox="0 0 12 12"><path d="M1 2h6v9H1z" fill="#fff" stroke="#222"/><path d="M2 3h4v2H2z" fill="#3c9ae6"/><path d="M6 2l6 4-6 5z"/></svg></button>
    </div>
    <div class="library">
      <div class="swatches">
        <button style="background:#ff8000" aria-label="Color C01"></button><button style="background:#cc6600" aria-label="Color C02"></button><button style="background:#994c00" aria-label="Color C03"></button><button style="background:#663300" aria-label="Color C04"></button><button style="background:#fff0cc" aria-label="Color D01"></button>
        <button style="background:#ffe399" aria-label="Color D02"></button><button style="background:#ffd766" aria-label="Color D03"></button><button style="background:#ffcb33" aria-label="Color D04"></button><button style="background:#ffbf00" aria-label="Color D05"></button><button style="background:#cc9900" aria-label="Color D06"></button>
        <button style="background:#997300" aria-label="Color D07"></button><button style="background:#664c00" aria-label="Color D08"></button><button style="background:#ffffcc" aria-label="Color E01"></button><button style="background:#ffff99" aria-label="Color E02"></button><button style="background:#ffff66" aria-label="Color E03"></button>
        <button style="background:#ffff33" aria-label="Color E04"></button><button style="background:#ffff00" aria-label="Color E05"></button><button style="background:#cccc00" aria-label="Color E06"></button><button style="background:#999900" aria-label="Color E07"></button><button style="background:#666600" aria-label="Color E08"></button>
        <button style="background:#e0ffc8" aria-label="Color F01"></button><button style="background:#c8ff96" aria-label="Color F02"></button><button style="background:#b0ff64" aria-label="Color F03"></button><button style="background:#98ff32" aria-label="Color F04"></button><button style="background:#80ff00" aria-label="Color F05"></button>
      </div>
      <div class="scroll">
        <svg viewBox="0 0 8 8"><path d="M1.500 5.500L4 3l2.500 2.500" fill="none" stroke="#333" stroke-width="1.200"/></svg>
        <i class="thumb"></i>
        <svg viewBox="0 0 8 8"><path d="M1.500 2.500L4 5l2.500-2.500" fill="none" stroke="#333" stroke-width="1.200"/></svg>
      </div>
    </div>
    <div class="head"><button class="toggle">Components</button><button class="close" aria-label="Close Components"><svg><use href="#x"/></svg></button></div>
    <div class="head"><button class="toggle">Styles</button><button class="close" aria-label="Close Styles"><svg><use href="#x"/></svg></button></div>
    <div class="head"><button class="toggle">Layers</button><button class="close" aria-label="Close Layers"><svg><use href="#x"/></svg></button></div>
    <div class="head"><button class="toggle">Shadows</button><button class="close" aria-label="Close Shadows"><svg><use href="#x"/></svg></button></div>
    <div class="head"><button class="toggle">Scenes</button><button class="close" aria-label="Close Scenes"><svg><use href="#x"/></svg></button></div>
    <div class="head"><button class="toggle">Instructor</button><button class="close" aria-label="Close Instructor"><svg><use href="#x"/></svg></button></div>
    <div class="rest"></div>
  </aside>
</main>

<footer class="status">
  <svg viewBox="0 0 12 12"><circle cx="6" cy="6" r="5" fill="#f6f6f6" stroke="#999"/><path d="M4 5a2 2 0 014 0L6.500 9h-1z" fill="#999"/></svg>
  <svg viewBox="0 0 12 12"><circle cx="6" cy="6" r="5" fill="#fff" stroke="#111" stroke-width="1.200"/><path d="M6 3v6M5 5.500h2" stroke="#111" stroke-width="1.200"/></svg>
  <svg viewBox="0 0 12 12"><circle cx="6" cy="6" r="5" fill="#ddd" stroke="#999"/><circle cx="6" cy="4.500" r="2" fill="#999"/><path d="M2 10c1-4 7-4 8 0z" fill="#999"/></svg>
  <i></i>
  <p>Select objects. Shift to extend select. Drag mouse to select multiple.</p>
</footer>
</body>
</html>
```
FILE: styles.css
```css
* { box-sizing: border-box; }
body {
  margin: 0;
  height: 100vh;
  display: flex;
  flex-direction: column;
  overflow: hidden;
  background: #f0f0f0;
  color: #000;
  font: 8px/12px "Open Sans", "Noto Sans", sans-serif;
}
button, input, select { font: inherit; color: inherit; margin: 0; padding: 0; border: 0; background: none; border-radius: 0; }
h1, h2, p { margin: 0; font-size: inherit; font-weight: inherit; }
svg { display: block; }
.sprite { position: absolute; width: 0; height: 0; }
.glyph { font: bold 8px "Liberation Serif", serif; }

.titlebar { display: flex; align-items: center; height: 17px; padding: 0 2px; background: #fff; }
.logo { width: 11px; height: 11px; margin-right: 4px; }
.winbtns { display: flex; margin-left: auto; }
.winbtns button { width: 33px; height: 17px; display: grid; place-items: center; }
.winbtns svg { width: 10px; height: 10px; }

.menu { display: flex; gap: 11px; height: 14px; padding-left: 5px; background: #fff; }
.menu button { line-height: 14px; }

.toolbar { display: flex; height: 28px; background: #eee; border-bottom: 1px solid #c4c4c4; }
.group { display: flex; align-items: center; background: #f1f1f1; border-right: 1px solid #bdbdbd; margin-right: -1px; }
.group.first { padding-right: 2px; }
.grip { width: 8px; height: 22px; background: radial-gradient(circle, #aaa 1px, transparent 1px) 2px 0 / 3px 3px repeat-y; }
.first .grip { width: 7px; }
.sep { width: 5px; height: 22px; background: linear-gradient(#a8a8a8, #a8a8a8) center / 1px 100% no-repeat; }
.tool { width: 25px; height: 25px; display: grid; place-items: center; }
.tool svg { width: 18px; height: 18px; }
.tool.on { background: #c3def5; border: 1px solid #9fcdf2; }
.drop { width: 16px; height: 25px; display: grid; place-items: center; }
.drop::before { content: ""; border: 4px solid transparent; border-top: 5px solid #000; border-bottom: 0; }
.measure { flex: none; width: 217px; }
.measure label { padding-left: 4px; }
.measure input { flex: 1; min-width: 0; height: 14px; margin: 0 4px 0 36px; background: #efefef; }

.work { flex: 1; display: flex; min-height: 0; }
.palette { flex: none; width: 53px; border-right: 1px solid #b4b4b4; }
.palette-tools { display: grid; grid-template-columns: 25px 25px; padding: 29px 1px 3px; border-bottom: 1px solid #b4b4b4; }
.hgrip, .hsep { grid-column: 1 / -1; height: 5px; }
.hgrip { background: radial-gradient(circle, #aaa 1px, transparent 1px) 1px 0 / 3px 3px repeat-x; }
.hsep { margin: 0 1px; background: linear-gradient(#999, #999) center / 100% 1px no-repeat; }

.viewport { flex: 1; min-width: 0; border: solid #8e8e8e; border-width: 2px 0 0 1px; background: #cdcec9; overflow: hidden; }
.viewport svg { width: 100%; height: 100%; }

.tray { flex: none; width: 209px; display: flex; flex-direction: column; border-left: 5px solid #e9e9e9; }
.tray-title { display: flex; align-items: center; gap: 5px; height: 14px; padding: 0 3px; background: linear-gradient(#bccbdc, #d5e3f0); }
.tray-title h2 { flex: 1; }
.tray-title button { width: 9px; height: 9px; display: grid; place-items: center; }
.tray-title svg, .close svg { width: 8px; height: 8px; }
.close-red { background: #d0505a; color: #fff; }
.head { display: flex; align-items: center; flex: none; height: 14px; padding: 0 3px 0 6px; border: 1px solid #b9b9b9; border-width: 1px 0; background: linear-gradient(#e9e9e9, #bcbcbc); }
.toggle { flex: 1; display: flex; align-items: center; gap: 5px; line-height: 12px; text-align: left; }
.toggle::before { content: ""; border: 3px solid transparent; border-left: 4px solid #000; border-right: 0; margin-right: 1px; }
.toggle.open::before { border: 3px solid transparent; border-top: 5px solid #000; border-bottom: 0; margin: 0 -1px 0 0; }
.close { width: 9px; height: 9px; border: 1px solid #aaa; background: #e6e6e6; display: grid; place-items: center; }
.entity { height: 130px; padding: 4px 0 0 3px; }
.entity p { padding: 0 3px 3px; border-bottom: 1px solid #bbb; font-weight: bold; }

.material { display: grid; grid-template-columns: 49px 1fr 18px; gap: 2px; height: 55px; padding: 1px 0 1px 1px; border-bottom: 1px solid #aaa; align-items: start; }
.preview { height: 50px; border: 1px solid #aaa; background: linear-gradient(135deg, transparent 50%, #fff 50%) 41px 41px / 6px 6px no-repeat, #0000c8; }
.material input { width: 100%; height: 14px; padding-left: 3px; border: 1px solid #a0a0a0; background: #fff; }
.side { display: grid; gap: 3px; justify-items: center; }
.side svg { width: 15px; height: 15px; }
.tabs { display: flex; align-items: end; height: 19px; border-bottom: 1px solid #ddd; }
.tabs button { height: 14px; padding: 0 5px; border: 1px solid #ddd; border-bottom: 0; line-height: 13px; }
.tabs .active { height: 15px; padding: 0 6px 0 4px; border-left: 0; background: #fff; }
.tabs button:nth-child(2) { padding: 0 12px 0 3px; }
.tabs .dropper { margin: 0 3px 2px auto; padding: 0; border: 0; }
.dropper svg { width: 14px; height: 14px; }
.nav { display: flex; align-items: center; gap: 5px; height: 21px; padding: 0 2px 0 6px; }
.nav button svg { width: 12px; height: 12px; }
.combo { position: relative; flex: 1; height: 17px; align-self: end; }
.combo select { width: 100%; height: 100%; padding-left: 3px; appearance: none; background: #fff; border: 1px solid #777; }
.combo svg { position: absolute; right: 2px; top: 5px; width: 8px; height: 8px; }
.library { display: flex; height: 141px; border-bottom: 3px double #ccc; background: #fff; }
.swatches { flex: 1; display: grid; grid-template-columns: repeat(5, 36px); grid-template-rows: 14px 36px 36px 36px 8px; gap: 2px; padding-left: 4px; }
.swatches button { border: 1px solid #a8a8a8; box-shadow: inset 0 0 0 1px #f4f4f4; }
.swatches button:nth-child(-n+5) { border-top: 0; box-shadow: inset 1px -1px #f4f4f4; }
.swatches button:nth-child(n+21) { border-bottom: 0; box-shadow: inset 1px 1px #f4f4f4; }
.scroll { width: 12px; display: flex; flex-direction: column; align-items: center; justify-content: space-between; padding: 3px 0; background: #f0f0f0; }
.scroll svg { width: 8px; height: 8px; }
.thumb { width: 12px; height: 12px; margin-bottom: 56px; background: #cdcdcd; }
.rest { flex: 1; background: #f5f9fe; }

.status { display: flex; align-items: center; gap: 10px; height: 21px; padding: 1px 0 0 3px; font-size: 9px; }
.status svg { width: 12px; height: 12px; }
.status i { width: 1px; height: 7px; margin-left: -2px; background: #888; }
.status p { margin-left: -3px; }
```
